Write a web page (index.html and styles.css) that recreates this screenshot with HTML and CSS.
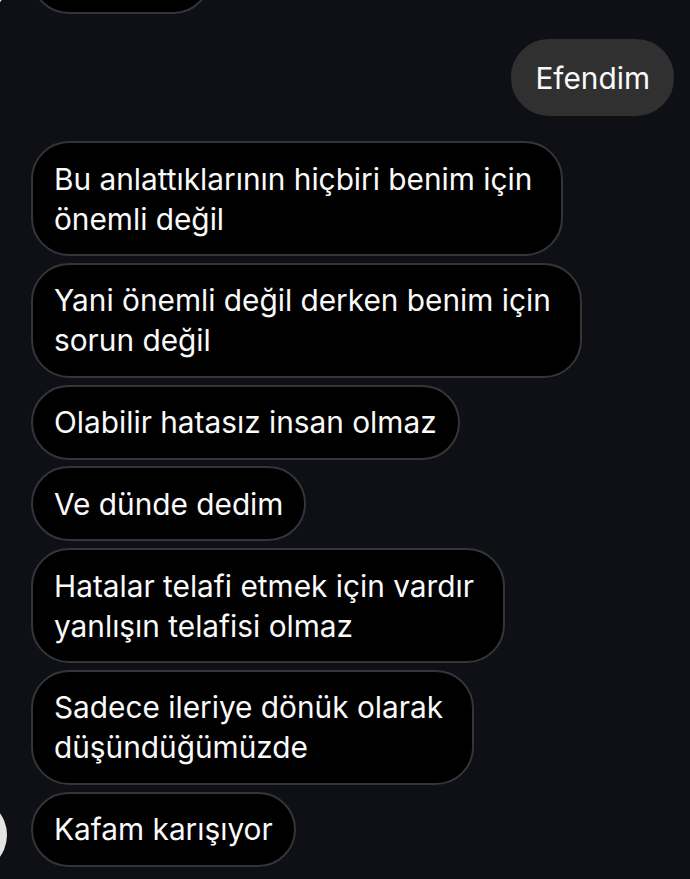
FILE: index.html
```html
<!DOCTYPE html>
<html lang="tr">
<head>
<meta charset="utf-8">
<link rel="stylesheet" href="styles.css">
</head>
<body>
<div class="chat">
  <div class="avatar avatar-top"></div>
  <div class="row in"><div class="bubble prev"></div></div>
  <div class="row out"><div class="bubble mine">Efendim</div></div>
  <div class="group">
    <div class="row in"><div class="bubble wrapped">Bu anlattıklarının hiçbiri benim için<br>önemli değil</div></div>
    <div class="row in"><div class="bubble wrapped">Yani önemli değil derken benim için<br>sorun değil</div></div>
    <div class="row in"><div class="bubble">Olabilir hatasız insan olmaz</div></div>
    <div class="row in"><div class="bubble">Ve dünde dedim</div></div>
    <div class="row in"><div class="bubble wrapped">Hatalar telafi etmek için vardır<br>yanlışın telafisi olmaz</div></div>
    <div class="row in"><div class="bubble wrapped">Sadece ileriye dönük olarak<br>düşündüğümüzde</div></div>
    <div class="row in last"><div class="bubble">Kafam karışıyor</div><div class="avatar avatar-bottom"></div></div>
  </div>
</div>
</body>
</html>
```

FILE: styles.css
```css
html, body {
  margin: 0;
  padding: 0;
  background: #0e1015;
  width: 690px;
  height: 879px;
  overflow: hidden;
}
.chat {
  position: relative;
  font-family: Inter, "Noto Sans", sans-serif;
  font-size: 29.8px;
  line-height: 40px;
  color: #fafafa;
  margin-top: -61px;
  display: flex;
  flex-direction: column;
}
.row {
  display: flex;
  position: relative;
}
.row.in { padding-left: 31px; }
.row.out { justify-content: flex-end; padding-right: 16px; margin-top: 25px; }
.group {
  display: flex;
  flex-direction: column;
  gap: 6.8px;
  margin-top: 25px;
}
.bubble {
  background: #000;
  border: 2px solid #34353a;
  border-radius: 38px;
  padding: 15.5px 21px;
  white-space: nowrap;
}
.bubble.wrapped { padding-right: 29px; }
.bubble.prev {
  width: 134px;
  height: 40px;
}
.bubble.mine {
  background: #303030;
  border-color: #303030;
  padding: 16.5px 22px;
}
.avatar {
  position: absolute;
  border-radius: 50%;
  background: #e4e4e4;
}
.avatar-top {
  width: 20px;
  height: 20px;
  left: -17px;
  top: 46px;
}
.avatar-bottom {
  width: 74px;
  height: 74px;
  left: -67px;
  top: 6px;
}
```
